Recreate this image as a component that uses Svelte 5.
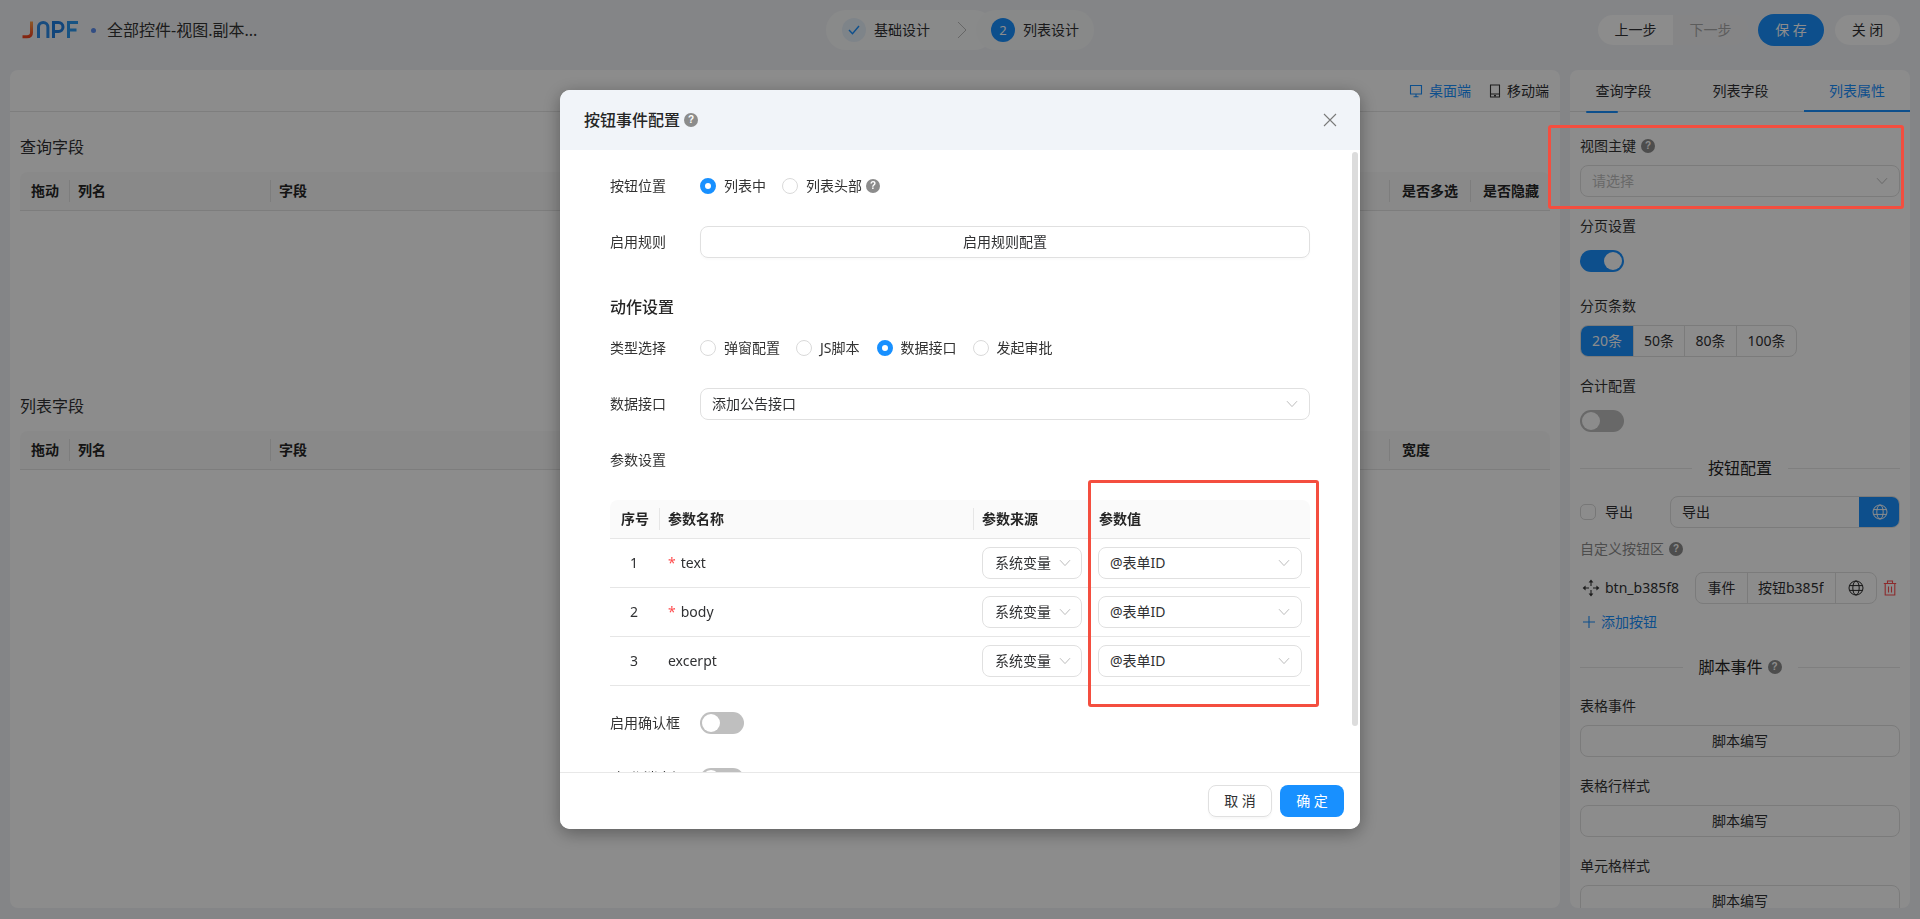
<script>
  const rows = [
    { n: 1, name: 'text', req: true },
    { n: 2, name: 'body', req: true },
    { n: 3, name: 'excerpt', req: false }
  ];
  const sizes = ['20条', '50条', '80条', '100条'];
  const types = [
    { t: '弹窗配置', on: false },
    { t: 'JS脚本', on: false },
    { t: '数据接口', on: true },
    { t: '发起审批', on: false }
  ];
  const scripts = ['表格事件', '表格行样式', '单元格样式'];
</script>

{#snippet chevron()}
  <svg class="chev" width="12" height="8" viewBox="0 0 12 8"><path d="M1 1.2 6 6.6l5-5.4" /></svg>
{/snippet}
{#snippet help()}
  <span class="help">?</span>
{/snippet}
{#snippet globe()}
  <svg class="globe" width="16" height="16" viewBox="0 0 16 16"><circle cx="8" cy="8" r="7" /><ellipse cx="8" cy="8" rx="3.2" ry="7" /><path d="M1.4 5.6h13.2M1.4 10.4h13.2" /></svg>
{/snippet}

<div class="page">
  <header class="top">
    <div class="brand">
      <svg class="logo" width="56" height="18" viewBox="0 0 56 18">
        <defs>
          <linearGradient id="jg" x1="0" y1="0" x2="0" y2="1"><stop offset="0" stop-color="#ffa24a" /><stop offset="1" stop-color="#f0431e" /></linearGradient>
        </defs>
        <path d="M9.5 0.5V11.5Q9.5 15.8 5 15.8H0.5" stroke="url(#jg)" />
        <path d="M16.5 17V6.2a4.7 4.7 0 0 1 9.4 0V17" stroke="#2a8ae8" />
        <path d="M31.5 17V1.5H36.5a4.4 4.4 0 0 1 0 9H31.5" stroke="#1f7fe0" />
        <path d="M46.5 17V1.5H56M46.5 9H54.5" stroke="#2a97ee" />
      </svg>
      <i class="dot"></i>
      <span class="doc">全部控件-视图.副本...</span>
    </div>
    <div class="steps">
      <div class="step first">
        <span class="circle done"><svg width="12" height="10" viewBox="0 0 12 10"><path d="M1 5l3.5 3.8L11 1" /></svg></span>
        <span class="stxt">基础设计</span>
        <svg class="arrow" width="10" height="18" viewBox="0 0 10 18"><path d="M1 1l8 8-8 8" /></svg>
      </div>
      <div class="step second">
        <span class="circle now">2</span>
        <span class="stxt">列表设计</span>
      </div>
    </div>
    <div class="actions">
      <div class="pager"><span class="pg on">上一步</span><span class="pg off">下一步</span></div>
      <span class="save">保 存</span>
      <span class="close">关 闭</span>
    </div>
  </header>

  <main class="body">
    <section class="left">
      <div class="bar">
        <span class="dev blue">
          <svg width="14" height="14" viewBox="0 0 14 14"><path d="M1.5 1.5h11v8.5h-11zM4.5 12.8h5M7 10v2.8" /></svg>桌面端
        </span>
        <span class="dev">
          <svg width="12" height="14" viewBox="0 0 12 14"><path d="M1.5 1h9v12h-9zM1.5 10h9M5 11.6h2" /></svg>移动端
        </span>
      </div>
      <div class="sec">
        <h3>查询字段</h3>
        <div class="thead q">
          <span class="th drag">拖动</span><span class="th">列名</span><span class="th">字段</span><span class="th wide">是否多选</span><span class="th wide">是否隐藏</span>
        </div>
      </div>
      <div class="sec">
        <h3>列表字段</h3>
        <div class="thead l">
          <span class="th drag">拖动</span><span class="th">列名</span><span class="th">字段</span><span class="th wide">宽度</span>
        </div>
      </div>
    </section>

    <aside class="right">
      <div class="tabs">
        <span class="tab">查询字段</span><span class="tab">列表字段</span><span class="tab active">列表属性</span>
        <i class="ink"></i>
      </div>
      <div class="props">
        <div class="item">
          <div class="lab">视图主键 {@render help()}</div>
          <div class="ctl"><div class="sel"><span class="ph">请选择</span>{@render chevron()}</div></div>
        </div>
        <div class="item">
          <div class="lab">分页设置</div>
          <div class="ctl"><span class="sw on"><b></b></span></div>
        </div>
        <div class="item">
          <div class="lab">分页条数</div>
          <div class="ctl">
            <div class="seg">
              {#each sizes as s, i}<span class="sg" class:cur={i === 0}>{s}</span>{/each}
            </div>
          </div>
        </div>
        <div class="item tail">
          <div class="lab">合计配置</div>
          <div class="ctl"><span class="sw"><b></b></span></div>
        </div>

        <div class="div d1"><i></i><span>按钮配置</span><i></i></div>

        <div class="export">
          <span class="chk"></span><span class="exl">导出</span>
          <div class="exin"><span>导出</span><em>{@render globe()}</em></div>
        </div>
        <div class="lab muted">自定义按钮区 {@render help()}</div>
        <div class="btnrow">
          <svg class="move" width="18" height="18" viewBox="0 0 18 18"><path d="M9 3v4M9 11v4M3 9h4M11 9h4" /><path class="fill" d="M9 .6l2.4 3H6.6zM9 17.4l2.4-3H6.6zM.6 9l3-2.4v4.8zM17.4 9l-3-2.4v4.8z" /></svg>
          <span class="bname">btn_b385f8</span>
          <div class="bgroup">
            <span class="bg1">事件</span>
            <span class="bg2"><span>按钮b385f8</span></span>
            <span class="bg3">{@render globe()}</span>
          </div>
          <svg class="trash" width="14" height="16" viewBox="0 0 14 16"><path d="M.8 3.5h12.4M4.5 3.3V1h5v2.3M2.2 3.5v11.5h9.6V3.5M5.5 6.5v6M8.5 6.5v6" /></svg>
        </div>
        <div class="add"><svg width="12" height="12" viewBox="0 0 12 12"><path d="M6 0v12M0 6h12" /></svg>添加按钮</div>

        <div class="div d2"><i></i><span>脚本事件 {@render help()}</span><i></i></div>

        {#each scripts as s}
          <div class="item">
            <div class="lab">{s}</div>
            <div class="ctl"><div class="wbtn">脚本编写</div></div>
          </div>
        {/each}
      </div>
    </aside>
  </main>

  <div class="mask"></div>

  <div class="modal">
    <div class="mh">
      <span class="mt">按钮事件配置 {@render help()}</span>
      <svg class="x" width="14" height="14" viewBox="0 0 14 14"><path d="M1 1l12 12M13 1L1 13" /></svg>
    </div>
    <div class="mb">
      <div class="scroll"></div>
      <div class="fr">
        <label for="none">按钮位置</label>
        <div class="radios">
          <span class="rd"><i class="ra on"></i>列表中</span>
          <span class="rd"><i class="ra"></i>列表头部 {@render help()}</span>
        </div>
      </div>
      <div class="fr">
        <label for="none">启用规则</label>
        <div class="wbtn grow shadow">启用规则配置</div>
      </div>
      <h4>动作设置</h4>
      <div class="fr">
        <label for="none">类型选择</label>
        <div class="radios types">
          {#each types as t}<span class="rd"><i class="ra" class:on={t.on}></i>{t.t}</span>{/each}
        </div>
      </div>
      <div class="fr">
        <label for="none">数据接口</label>
        <div class="sel grow"><span>添加公告接口</span>{@render chevron()}</div>
      </div>
      <div class="fr"><label for="none">参数设置</label></div>
      <div class="ptable">
        <div class="pr ph-row">
          <span class="pc c1"><b>序号</b></span><span class="pc c2"><b>参数名称</b></span><span class="pc c3"><b>参数来源</b></span><span class="pc c4"><b>参数值</b></span>
        </div>
        {#each rows as r}
          <div class="pr">
            <span class="num">{r.n}</span>
            <span class="nm">{#if r.req}<em>*</em>{/if}{r.name}</span>
            <span class="c3b"><div class="sel mini"><span>系统变量</span>{@render chevron()}</div></span>
            <span class="c4b"><div class="sel val"><span>@表单ID</span>{@render chevron()}</div></span>
          </div>
        {/each}
      </div>
      <div class="fr sw1">
        <label for="none">启用确认框</label>
        <span class="sw light"><b></b></span>
      </div>
      <div class="fr sw2">
        <label for="none">操作消息提示</label>
        <span class="sw light"><b></b></span>
      </div>
    </div>
    <div class="mf">
      <span class="cancel">取 消</span>
      <span class="ok">确 定</span>
    </div>
  </div>

  <div class="red r1"></div>
  <div class="red r2"></div>
</div>

<style>
  :global(body) { margin: 0; background: #f1f3f6; }
  .page {
    height: 919px; width: 1920px; overflow: hidden; display: flex; flex-direction: column;
    font: 14px/22px "Noto Sans", "Noto Sans CJK SC", sans-serif; color: #303133; background: #f1f3f6;
  }
  .top { height: 60px; display: grid; grid-template-columns: 1fr auto 1fr; align-items: center; padding: 0 20px 0 22px; flex: none; }
  .brand { display: flex; align-items: center; }
  .logo { flex: none; }
  .logo path { fill: none; stroke-width: 3; }
  .dot { width: 5px; height: 5px; border-radius: 50%; background: #5b8def; margin: 0 11px 0 13px; }
  .doc { font-size: 16px; color: #333; }
  .steps { display: flex; align-items: center; margin-left: -2px; }
  .stxt { white-space: nowrap; }
  .step { height: 40px; display: flex; align-items: center; border-radius: 20px; }
  .first { background: #fafbfc; padding: 0 0 0 16px; gap: 8px; width: 168px; box-sizing: border-box; }
  .second { background: #f8f9fa; margin-left: -18px; padding: 0 15px; gap: 8px; width: 118px; box-sizing: border-box; }
  .circle { width: 24px; height: 24px; border-radius: 50%; display: flex; align-items: center; justify-content: center; flex: none; }
  .done { background: #e6f0fa; }
  .done svg path { fill: none; stroke: #1890ff; stroke-width: 1.4; }
  .now { background: #1890ff; color: #fff; font-size: 13px; }
  .arrow { margin-left: 19px; flex: none; }
  .arrow path { fill: none; stroke: #bbb; stroke-width: 1; }
  .actions { display: flex; align-items: center; justify-content: flex-end; }
  .pager { display: flex; height: 30px; border-radius: 15px; overflow: hidden; margin-right: 10px; }
  .pg { width: 75px; text-align: center; line-height: 30px; }
  .on.pg { background: #fff; }
  .off.pg { background: #f3f3f5; color: #a8a8a8; }
  .save { width: 66px; height: 32px; line-height: 32px; border-radius: 16px; background: #1890ff; color: #fff; text-align: center; margin-right: 11px; }
  .close { width: 65px; height: 30px; line-height: 30px; border-radius: 15px; background: #fff; text-align: center; }

  .body { flex: none; height: 838px; margin-top: 10px; padding: 0 10px; display: flex; gap: 10px; }
  .left { flex: 1; background: #fff; border-radius: 8px; min-width: 0; overflow: hidden; }
  .bar { height: 42px; box-sizing: border-box; border-bottom: 1px solid #e6e6e6; display: flex; justify-content: flex-end; align-items: center; gap: 18px; padding-right: 11px; }
  .dev { display: flex; align-items: center; gap: 6px; }
  .dev svg path { fill: none; stroke: #333; stroke-width: 1.1; }
  .blue { color: #1890ff; }
  .dev.blue svg path { stroke: #1890ff; }
  .sec { height: 259px; padding: 23px 10px 0; box-sizing: border-box; }
  h3 { margin: 0 0 13px; font: 400 16px/24px "Noto Sans", "Noto Sans CJK SC", sans-serif; color: #303133; }
  .thead { height: 39px; background: #fafafa; border-bottom: 1px solid #e4e4e4; box-sizing: border-box; display: grid; align-items: center; border-radius: 8px 8px 0 0; }
  .q { grid-template-columns: 49px 201px 1fr 81px 80px; }
  .l { grid-template-columns: 49px 201px 1fr 161px; }
  .th { font-weight: 600; color: #262626; padding-left: 8px; border-left: 1px solid #e4e4e4; height: 22px; }
  .th.drag { border: 0; padding-left: 11px; }
  .th.wide { padding-left: 12px; white-space: nowrap; }

  .right { width: 340px; flex: none; background: #fff; border-radius: 8px; overflow: hidden; }
  .tabs { height: 42px; display: grid; grid-template-columns: 1fr 1fr 106px; border-bottom: 1px solid #e4e4e4; box-sizing: border-box; position: relative; }
  .tab { text-align: center; line-height: 41px; padding-right: 10px; }
  .active { color: #1890ff; border-bottom: 2px solid #1890ff; height: 42px; box-sizing: border-box; line-height: 41px; padding-right: 0; }
  .ink { position: absolute; left: 16px; top: 41px; width: 32px; height: 2px; background: #1890ff; border-radius: 1px; }
  .props { padding: 23px 10px 0; }
  .item { margin-bottom: 18px; }
  .item.tail { margin-bottom: 0; }
  .lab { height: 22px; margin-bottom: 8px; display: flex; align-items: center; gap: 5px; color: #333; }
  .ctl { height: 32px; display: flex; align-items: center; }
  .sel { height: 32px; width: 100%; box-sizing: border-box; border: 1px solid #e0e0e0; border-radius: 8px; display: flex; align-items: center; justify-content: space-between; padding: 0 11px; background: #fff; }
  .ph { color: #bfbfbf; }
  .chev { flex: none; }
  .chev path { fill: none; stroke: #bdbdbd; stroke-width: 1; }
  .help { width: 14px; height: 14px; border-radius: 50%; background: #8c8c8c; color: #fff; font: 700 10px/14px "Liberation Sans", sans-serif; text-align: center; display: inline-block; flex: none; vertical-align: -1px; }
  .sw { width: 44px; height: 22px; border-radius: 11px; background: #bdbdbd; display: flex; align-items: center; padding: 2px; box-sizing: border-box; flex: none; }
  .sw b { width: 18px; height: 18px; border-radius: 50%; background: #fff; display: block; }
  .sw.on { background: #1890ff; justify-content: flex-end; }
  .seg { display: flex; height: 32px; border: 1px solid #e0e0e0; border-radius: 8px; box-sizing: border-box; overflow: hidden; }
  .sg { line-height: 30px; text-align: center; width: 51px; box-sizing: border-box; border-left: 1px solid #e0e0e0; }
  .sg:first-child { width: 52px; border-left: 0; background: #1890ff; color: #fff; }
  .sg:nth-child(3) { width: 52px; }
  .sg:last-child { width: 60px; }
  .div { display: flex; align-items: center; font-size: 16px; line-height: 24px; color: #262626; gap: 16px; }
  .div i { flex: 1; height: 1px; background: #e8e8e8; }
  .div > span { display: flex; align-items: center; gap: 5px; }
  .d1 { margin: 19px 0 16px; }
  .d2 { margin: 17px 0 16px; }
  .export { display: flex; align-items: center; height: 32px; margin-bottom: 10px; }
  .chk { width: 16px; height: 16px; box-sizing: border-box; border: 1px solid #d9d9d9; border-radius: 5px; background: #fff; margin-right: 9px; }
  .exl { width: 65px; }
  .exin { flex: 1; height: 32px; box-sizing: border-box; border: 1px solid #e0e0e0; border-radius: 8px; display: flex; justify-content: space-between; align-items: center; padding-left: 11px; overflow: hidden; }
  .exin em { width: 41px; height: 32px; background: #1890ff; display: flex; align-items: center; justify-content: center; margin-right: -1px; }
  .exin .globe circle, .exin .globe ellipse, .exin .globe path { stroke: #fff; }
  .globe circle, .globe ellipse, .globe path { fill: none; stroke: #262626; stroke-width: 1; }
  .muted { color: #8c8c8c; margin-bottom: 12px; }
  .btnrow { height: 32px; display: flex; align-items: center; }
  .move { margin-left: 2px; margin-right: 5px; flex: none; }
  .move path { fill: none; stroke: #333; stroke-width: 1.1; }
  .move path.fill { fill: #333; stroke: none; }
  .bname { width: 90px; flex: none; }
  .bgroup { width: 182px; height: 32px; flex: none; box-sizing: border-box; border: 1px solid #e0e0e0; border-radius: 8px; display: flex; align-items: center; line-height: 30px; }
  .bg1 { width: 51px; text-align: center; }
  .bg2 { width: 89px; box-sizing: border-box; border: solid #e0e0e0; border-width: 0 1px; height: 30px; padding: 0 10px; }
  .bg2 span { display: block; width: 66px; overflow: hidden; white-space: nowrap; }
  .bg3 { flex: 1; display: flex; justify-content: center; align-items: center; }
  .trash { margin-left: 6px; flex: none; }
  .trash path { fill: none; stroke: #ff4d4f; stroke-width: 1.1; }
  .add { height: 32px; display: flex; align-items: center; gap: 6px; color: #1890ff; margin: 2px 0 0 3px; }
  .add svg path { stroke: #1890ff; stroke-width: 1.1; }
  .wbtn { height: 32px; width: 100%; box-sizing: border-box; border: 1px solid #e0e0e0; border-radius: 8px; text-align: center; line-height: 30px; background: #fff; }

  .mask { position: fixed; inset: 0; background: rgba(0, 0, 0, .45); z-index: 10; }
  .modal { position: fixed; left: 560px; top: 90px; width: 800px; height: 739px; background: #fff; border-radius: 10px; z-index: 20; display: flex; flex-direction: column; box-shadow: 0 4px 18px rgba(0, 0, 0, .35); overflow: hidden; }
  .mh { height: 60px; flex: none; background: #f1f4f9; display: flex; align-items: center; justify-content: space-between; padding: 0 23px 0 24px; }
  .mt { font-size: 16px; font-weight: 500; color: #262626; display: flex; align-items: center; gap: 4px; }
  .x path { fill: none; stroke: #7a7a7a; stroke-width: 1.1; }
  .mb { flex: 1; min-height: 0; overflow: hidden; padding: 20px 50px 0; position: relative; }
  .scroll { position: absolute; right: 2px; top: 2px; width: 6px; height: 574px; border-radius: 3px; background: #dcdcdc; }
  .fr { display: flex; align-items: center; min-height: 32px; margin-bottom: 24px; }
  .fr label { width: 90px; flex: none; color: #333; white-space: nowrap; }
  .grow { flex: 1; width: auto; }
  .shadow { box-shadow: 0 2px 2px rgba(0, 0, 0, .02); }
  h4 { margin: 37px 0 13px; font: 500 16px/24px "Noto Sans", "Noto Sans CJK SC", sans-serif; color: #262626; }
  .radios { display: flex; gap: 16px; }
  .types .rd:nth-child(2) { margin-right: 1px; }
  .rd { display: flex; align-items: center; gap: 8px; color: #333; }
  .rd .help { margin-left: -4px; }
  .ra { width: 16px; height: 16px; box-sizing: border-box; border: 1px solid #d9d9d9; border-radius: 50%; background: #fff; flex: none; }
  .ra.on { border: 5px solid #1890ff; }
  .ptable { margin-bottom: 21px; }
  .pr { display: grid; grid-template-columns: 49px 314px 115px 222px; height: 49px; border-bottom: 1px solid #e6e6e6; box-sizing: border-box; align-items: center; }
  .ph-row { height: 39px; background: #fafafa; border-radius: 8px 8px 0 0; }
  .pc { height: 22px; padding-left: 8px; border-left: 1px solid #e6e6e6; color: #262626; }
  .pc b { font-weight: 600; }
  .pc.c1 { border: 0; padding-left: 11px; }
  .pc.c4 { padding-left: 10px; border-left-color: #fafafa; }
  .num { text-align: center; padding-right: 1px; }
  .nm { padding-left: 9px; }
  .nm em { color: #ff4d4f; font-style: normal; margin-right: 5px; }
  .c3b { padding-left: 9px; }
  .c4b { padding-left: 10px; }
  .mini { width: 100px; padding: 0 10px 0 12px; }
  .val { width: 204px; }
  .sw1 { margin-bottom: 24px; }
  .sw2 label { padding: 0 0 3px 6px; width: 84px; letter-spacing: -.2px; }
  .sw.light { background: #bfbfbf; }
  .mf { height: 57px; flex: none; border-top: 1px solid #e8e8e8; box-sizing: border-box; display: flex; justify-content: flex-end; align-items: flex-start; gap: 8px; padding: 12px 16px 0 0; background: #fff; position: relative; }
  .cancel, .ok { width: 64px; height: 32px; box-sizing: border-box; border-radius: 8px; text-align: center; line-height: 30px; }
  .cancel { border: 1px solid #e0e0e0; box-shadow: 0 2px 2px rgba(0, 0, 0, .03); }
  .ok { background: #1890ff; color: #fff; line-height: 32px; }
  .red { position: fixed; border: 3px solid #f44e3f; border-radius: 3px; box-sizing: border-box; z-index: 30; }
  .r1 { left: 1548px; top: 125px; width: 356px; height: 84px; }
  .r2 { left: 1088px; top: 480px; width: 231px; height: 227px; }
</style>
